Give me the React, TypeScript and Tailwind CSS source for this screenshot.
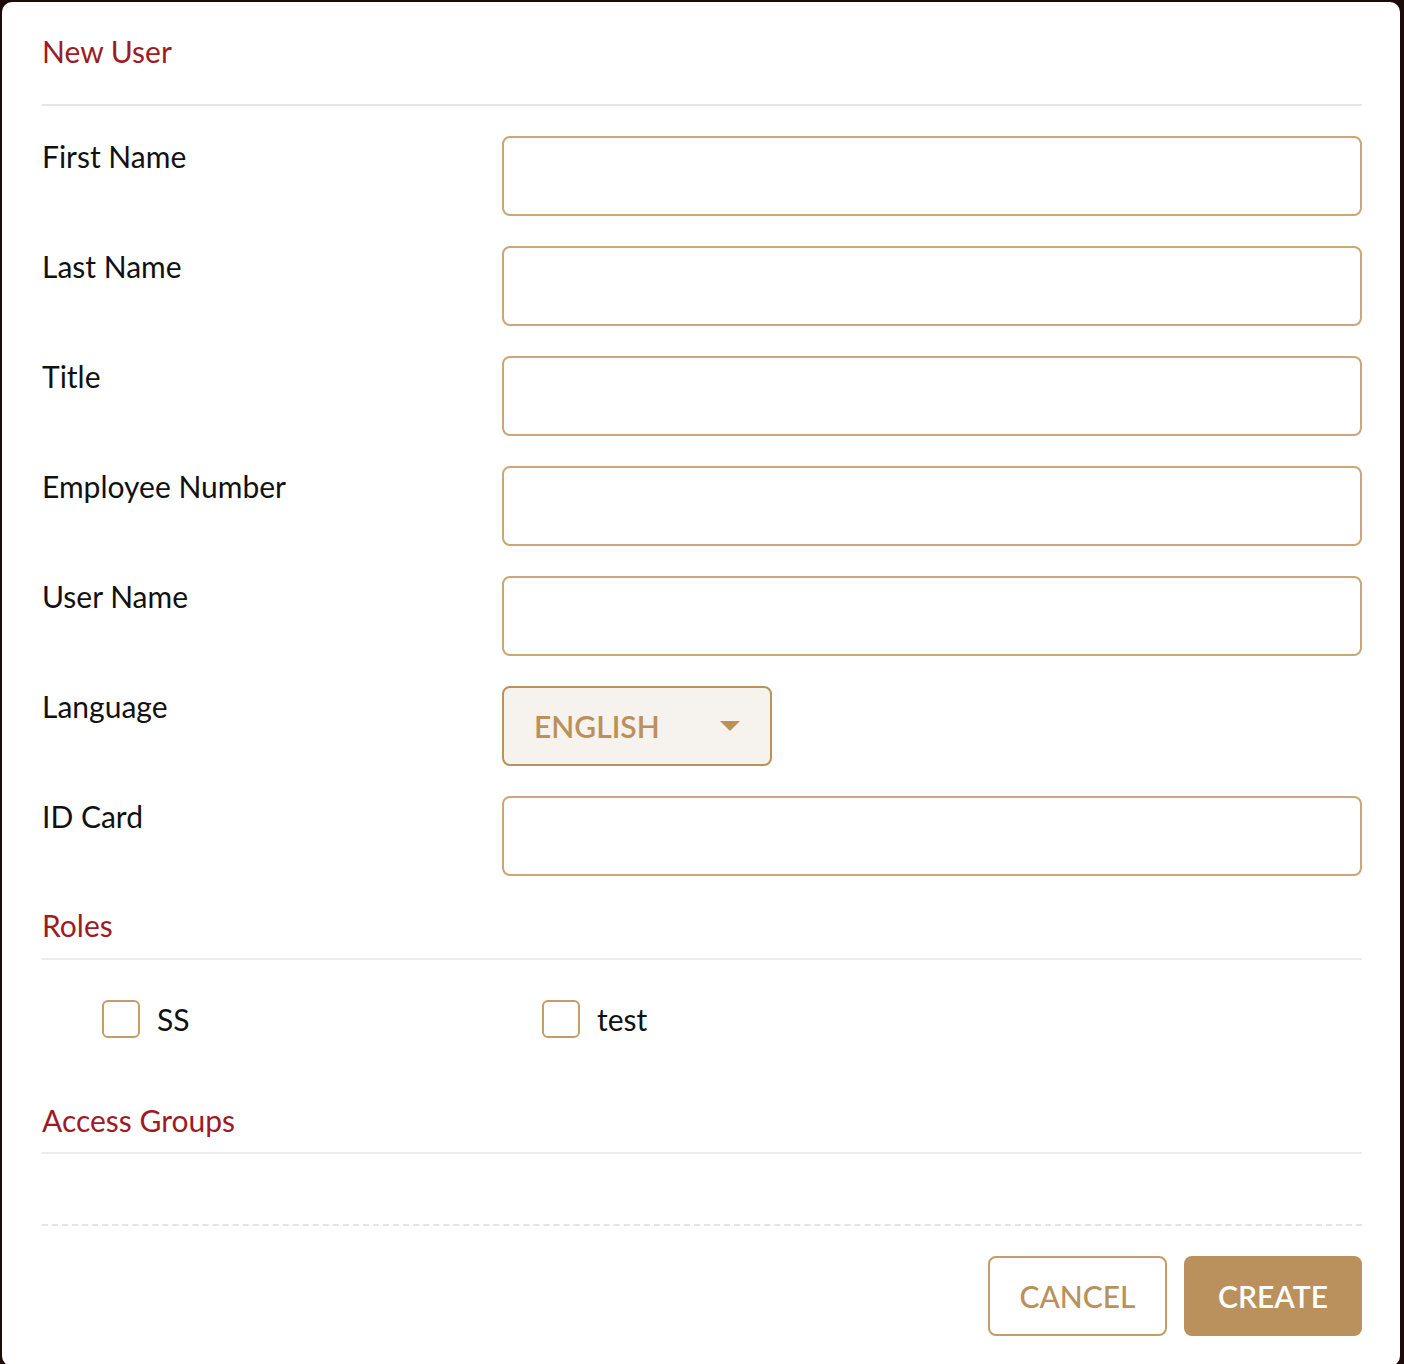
import React from "react";

const fields = [
  "First Name",
  "Last Name",
  "Title",
  "Employee Number",
  "User Name",
  "Language",
  "ID Card",
];

function Field({ label }: { label: string }) {
  return (
    <div className="flex">
      <div className="w-[460px] shrink-0 text-[30px] leading-[40px] text-[#111]">{label}</div>
      {label === "Language" ? (
        <div className="flex h-[80px] w-[270px] items-center justify-between rounded-[8px] border-2 border-[#bb915b] bg-[#f6f2ed] pl-[30px] pr-[30px]">
          <span className="text-[30px] font-semibold leading-none text-[#bb915b]">ENGLISH</span>
          <svg width="20" height="10" viewBox="0 0 20 10">
            <path d="M0 0 L20 0 L10 10 Z" fill="#bb915b" />
          </svg>
        </div>
      ) : (
        <div className="h-[80px] flex-1 rounded-[8px] border-2 border-[#cba676] bg-white" />
      )}
    </div>
  );
}

function Checkbox({ label }: { label: string }) {
  return (
    <div className="flex w-[440px] items-center pl-[60px]">
      <div className="h-[38px] w-[38px] rounded-[6px] border-2 border-[#c49c68] bg-white" />
      <span className="ml-[17px] text-[30px] leading-[34px] text-[#111]">{label}</span>
    </div>
  );
}

export default function App() {
  return (
    <div
      className="h-[1364px] w-[1404px] overflow-hidden bg-[#1c0b0b] pl-[2px] pr-[4px] pt-[2px]"
      style={{ fontFamily: "Lato, 'Open Sans', sans-serif" }}
    >
      <div className="h-[1364px] rounded-[10px] bg-white pl-[40px] pr-[38px] pt-[29px]">
        <h1 className="text-[30px] leading-[40px] text-[#9d1c24]">New User</h1>
        <div className="mt-[33px] h-[2px] bg-[#e6e6e6]" />

        <div className="mt-[30px] flex flex-col gap-[30px]">
          {fields.map((f) => (
            <Field key={f} label={f} />
          ))}
        </div>

        <h2 className="mt-[29px] text-[30px] leading-[40px] text-[#9d1c24]">Roles</h2>
        <div className="mt-[13px] h-[2px] bg-[#ececec]" />
        <div className="mt-[40px] flex">
          <Checkbox label="SS" />
          <Checkbox label="test" />
        </div>

        <h2 className="mt-[62px] text-[30px] leading-[40px] text-[#9d1c24]">Access Groups</h2>
        <div className="mt-[12px] h-[2px] bg-[#ececec]" />

        <div className="mt-[70px] border-t-2 border-dashed border-[#e4e4e4]" />

        <div className="mt-[30px] flex justify-end gap-[17px]">
          <button className="h-[80px] w-[179px] rounded-[8px] border-2 border-[#c49c68] bg-white text-[30px] font-medium text-[#bb915b]">
            CANCEL
          </button>
          <button className="h-[80px] w-[178px] rounded-[8px] bg-[#ba915c] text-[30px] font-semibold text-white">
            CREATE
          </button>
        </div>
      </div>
    </div>
  );
}
